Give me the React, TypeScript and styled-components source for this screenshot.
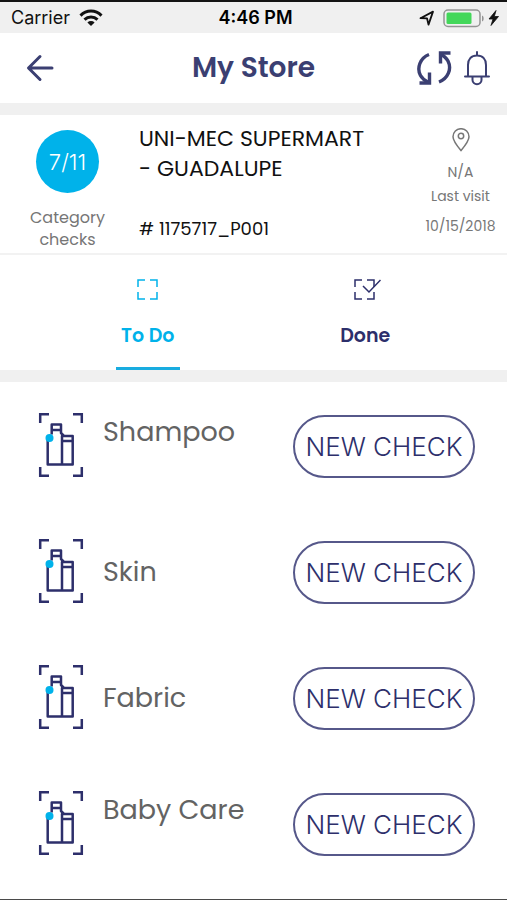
import React from "react";
import styled, { createGlobalStyle } from "styled-components";

const navy = "#3b3f72";
const ink = "#2d2f6b";
const cyan = "#00b2ea";
const band = "#f0f0f0";

const GlobalStyle = createGlobalStyle`
  * { box-sizing: border-box; }
  body {
    margin: 0;
    background: #fff;
    color: #111;
    font-family: Poppins, Inter, sans-serif;
  }
  button { font: inherit; color: inherit; background: none; border: 0; padding: 0; cursor: pointer; }
  h1, h2, p { margin: 0; }
  svg { display: block; flex: none; fill: none; }
`;

const Screen = styled.div`
  min-height: 100vh;
  display: flex;
  flex-direction: column;
  border-top: 2px solid #141414;
  border-bottom: 1px solid #4a4a4a;
`;

const StatusBar = styled.div`
  display: grid;
  grid-template-columns: 1fr auto 1fr;
  align-items: center;
  height: 31px;
  padding: 0 7px 0 11px;
  background: ${band};
  font-family: Inter, sans-serif;
  font-size: 18px;
`;

const StatusGroup = styled.div<{ $end?: boolean }>`
  display: flex;
  align-items: center;
  gap: 9px;
  justify-content: ${(p) => (p.$end ? "flex-end" : "flex-start")};
`;

const Clock = styled.span`
  font-size: 18px;
  font-weight: 600;
  color: #000;
`;

const Header = styled.header`
  display: grid;
  grid-template-columns: 1fr auto 1fr;
  align-items: center;
  height: 70px;
  padding: 0 16px;
  color: ${navy};
`;

const Title = styled.h1`
  font-size: 28px;
  line-height: 40px;
  font-weight: 600;
`;

const HeaderActions = styled.div`
  display: flex;
  justify-content: flex-end;
  gap: 11px;
`;

const IconButton = styled.button`
  justify-self: start;
`;

const BackButton = styled(IconButton)`
  padding: 0 10px;
`;

const Band = styled.div`
  height: 12px;
  background: ${band};
`;

const Store = styled.section`
  display: grid;
  grid-template-columns: 139px 1fr 93px;
  height: 140px;
  border-bottom: 2px solid #f2f2f2;
`;

const Progress = styled.div`
  display: flex;
  flex-direction: column;
  align-items: center;
  padding: 15px 4px 0 0;
  font-size: 16px;
  line-height: 22px;
  text-align: center;
  color: #767676;
`;

const Count = styled.div`
  display: flex;
  align-items: center;
  justify-content: center;
  width: 63px;
  height: 63px;
  margin-bottom: 14px;
  border-radius: 50%;
  background: ${cyan};
  color: #fff;
  font-family: Inter, sans-serif;
  font-size: 22px;
  font-weight: 300;
`;

const StoreText = styled.div`
  padding-top: 9px;
  white-space: nowrap;
`;

const StoreName = styled.h2`
  margin-bottom: 30px;
  font-size: 22px;
  line-height: 30px;
  font-weight: 400;
`;

const StoreId = styled.p`
  font-size: 18px;
  line-height: 30px;
`;

const Visit = styled.div`
  display: flex;
  flex-direction: column;
  align-items: center;
  padding-top: 13px;
  font-size: 14px;
  line-height: 24px;
  color: #777;
`;

const VisitPlace = styled.p`
  margin-top: 8px;
`;

const VisitDate = styled.p`
  margin-top: 6px;
`;

const Tabs = styled.nav`
  display: grid;
  grid-template-columns: 1fr 1fr;
  height: 115px;
  padding: 0 33px 0 39px;
`;

const Tab = styled.button<{ $active?: boolean }>`
  justify-self: center;
  display: flex;
  flex-direction: column;
  align-items: center;
  gap: 21px;
  min-width: 64px;
  padding-top: 24px;
  font-size: 19px;
  line-height: 30px;
  font-weight: 600;
  color: ${(p) => (p.$active ? cyan : ink)};
  border-bottom: 3px solid ${(p) => (p.$active ? "#18ace0" : "transparent")};
`;

const List = styled.ul`
  margin: 0;
  padding: 1px 0 0;
  list-style: none;
`;

const Row = styled.li`
  display: grid;
  grid-template-columns: 65px 1fr 182px;
  align-items: center;
  height: 126px;
  padding: 0 32px 0 38px;
`;

const Name = styled.span<{ $raised?: boolean }>`
  padding-bottom: ${(p) => (p.$raised ? 28 : 0)}px;
  font-size: 27px;
  line-height: 40px;
  color: #636363;
`;

const CheckButton = styled.button`
  height: 63px;
  border: 2px solid #56588a;
  border-radius: 32px;
  font-family: Inter, sans-serif;
  font-size: 26px;
  font-weight: 300;
  color: ${ink};
  white-space: nowrap;
`;

const Wifi = () => (
  <svg width="24" height="18" viewBox="0 0 24 18" stroke="#111" strokeWidth="3">
    <path d="M1.5 6.600C7.400.6 16.600.6 22.500 6.600" />
    <path d="M5.500 10.700c3.700-3.600 9.300-3.600 13 0" />
    <path d="M12 17l-3.600-3.500a5.200 5.200 0 0 1 7.200 0z" fill="#111" stroke="none" />
  </svg>
);

const StatusIcons = () => (
  <svg width="84" height="20" viewBox="0 0 84 20">
    <path d="M4.500 10.200L17 3.600l-4.500 13-1.500-6.300z" stroke="#111" strokeWidth="1.800" strokeLinejoin="round" />
    <rect x="28" y="2" width="36" height="16.500" rx="4" stroke="#949494" strokeWidth="1.500" />
    <rect x="30.500" y="4.500" width="25" height="11.500" rx="1.500" fill="#43d75a" />
    <path d="M66 7.500c2.200.5 2.200 5.500 0 6z" fill="#949494" />
    <path d="M80 2.500L73 11h4l-2 6.500 7.500-9h-4.200z" fill="#111" stroke="#111" strokeWidth=".8" strokeLinejoin="round" />
  </svg>
);

const BackArrow = () => (
  <svg width="28" height="28" viewBox="0 0 28 28" stroke={navy} strokeWidth="3" strokeLinecap="round" strokeLinejoin="round">
    <path d="M26 14H3M14 2.500L2.500 14 14 25.500" />
  </svg>
);

const SyncIcon = () => (
  <svg width="36" height="36" viewBox="0 0 36 36" stroke={navy} strokeWidth="3.400">
    <path d="M13 4.500C4 8 .5 18 4.500 25.500c1.500 2.700 4 5 8 7" />
    <path d="M3.500 33h10V22.500" />
    <path d="M23 32C32 28.500 36 19 32 11c-1.500-2.900-4-5-8-7.500" />
    <path d="M34.500 3H24.500V13.500" />
  </svg>
);

const BellIcon = () => (
  <svg width="28" height="36" viewBox="0 0 28 36" stroke={navy} strokeWidth="2" strokeLinecap="round">
    <path d="M14 2v3M2 26.500h24M5 26V15C5 9 8.500 5.500 14 5.500s9 3.500 9 9.500V26M9.500 27v3c0 5.500 9 5.500 9 0V27" />
  </svg>
);

const PinIcon = () => (
  <svg width="18" height="24" viewBox="0 0 18 24" stroke="#777" strokeWidth="1.500">
    <path d="M9 22.500C4.800 17.500 1 13 1 8.700a8 8 0 0 1 16 0C17 13 13.200 17.500 9 22.500z" />
    <circle cx="9" cy="8" r="2.700" />
  </svg>
);

const framePath = "M1 8V1h7M13 1h7v7M20 13v7h-7M8 20H1v-7";

const TodoIcon = () => (
  <svg width="21" height="21" viewBox="0 0 21 21" stroke={cyan} strokeWidth="1.500">
    <path d={framePath} />
  </svg>
);

const DoneIcon = () => (
  <svg width="31" height="21" viewBox="-4 0 31 21" stroke={ink} strokeWidth="1.500">
    <path d={framePath} />
    <path d="M9 7l6 6L26.500 1" />
  </svg>
);

const ProductIcon = () => (
  <svg width="46" height="69" viewBox="0 0 46 69" stroke={ink} strokeWidth="2.500">
    <path d="M2.200 11V2.200H11M35 2.200h8.800V11M43.800 55v8.800H35M11 63.800H2.200V55" />
    <path
      d="M9.700 26v26.500h25V24H24v28.500M24 29h10.700M13.700 12.500h9.300v5.500h-9.300zM13.700 18v4.500M23 18v3l3 3"
      strokeLinejoin="round"
    />
    <circle cx="11.500" cy="26" r="4" fill={cyan} stroke="none" />
  </svg>
);

const categories = [
  { name: "Shampoo", raised: true },
  { name: "Skin" },
  { name: "Fabric" },
  { name: "Baby Care", raised: true },
];

export default function App() {
  return (
    <Screen>
      <GlobalStyle />
      <StatusBar>
        <StatusGroup>
          Carrier
          <Wifi />
        </StatusGroup>
        <Clock>4:46 PM</Clock>
        <StatusGroup $end>
          <StatusIcons />
        </StatusGroup>
      </StatusBar>
      <Header>
        <BackButton aria-label="Back">
          <BackArrow />
        </BackButton>
        <Title>My Store</Title>
        <HeaderActions>
          <IconButton aria-label="Sync">
            <SyncIcon />
          </IconButton>
          <IconButton aria-label="Notifications">
            <BellIcon />
          </IconButton>
        </HeaderActions>
      </Header>
      <Band />
      <Store>
        <Progress>
          <Count>7/11</Count>
          Category
          <br />
          checks
        </Progress>
        <StoreText>
          <StoreName>
            UNI-MEC SUPERMART
            <br />- GUADALUPE
          </StoreName>
          <StoreId># 1175717_P001</StoreId>
        </StoreText>
        <Visit>
          <PinIcon />
          <VisitPlace>N/A</VisitPlace>
          <p>Last visit</p>
          <VisitDate>10/15/2018</VisitDate>
        </Visit>
      </Store>
      <Tabs>
        <Tab $active aria-current="page">
          <TodoIcon />
          To Do
        </Tab>
        <Tab>
          <DoneIcon />
          Done
        </Tab>
      </Tabs>
      <Band />
      <List>
        {categories.map((c) => (
          <Row key={c.name}>
            <ProductIcon />
            <Name $raised={c.raised}>{c.name}</Name>
            <CheckButton aria-label={`NEW CHECK ${c.name}`}>NEW CHECK</CheckButton>
          </Row>
        ))}
      </List>
    </Screen>
  );
}
